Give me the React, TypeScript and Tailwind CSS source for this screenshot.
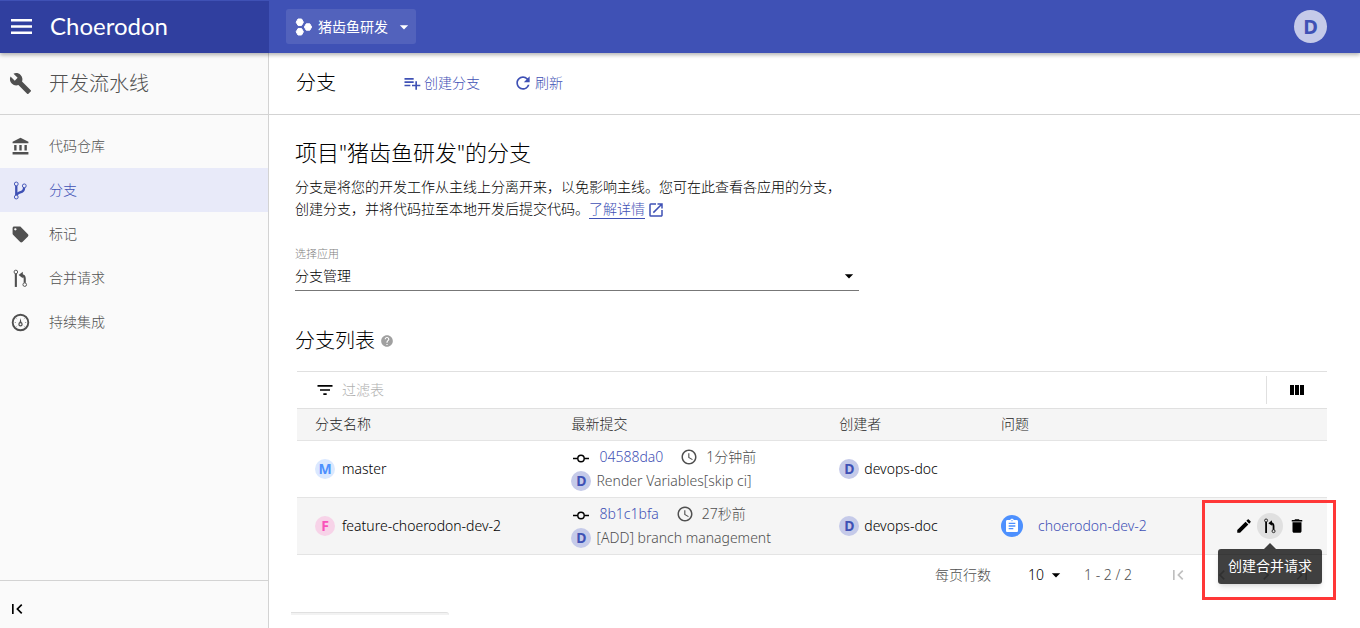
import { useState } from 'react';
import {
  MdAccessTime,
  MdAccountBalance,
  MdArrowDropDown,
  MdAssignment,
  MdBuild,
  MdChevronLeft,
  MdChevronRight,
  MdDelete,
  MdEdit,
  MdFilterList,
  MdFirstPage,
  MdHelp,
  MdLastPage,
  MdLocalOffer,
  MdOpenInNew,
  MdPlaylistAdd,
  MdRefresh,
} from 'react-icons/md';

interface IconProps {
  className?: string;
}

function MenuIcon({ className }: IconProps) {
  return (
    <svg viewBox="0 0 21 15" fill="currentColor" className={className}>
      <path d="M0 0h21v2.600H0zM0 6.200h21v2.600H0zM0 12.400h21V15H0z" />
    </svg>
  );
}

function BranchIcon({ className }: IconProps) {
  return (
    <svg viewBox="0 0 18 18" fill="none" stroke="currentColor" className={className}>
      <circle cx="5" cy="2.8" r="1.8" strokeWidth="0.9" />
      <circle cx="5" cy="15.2" r="1.8" strokeWidth="0.9" />
      <circle cx="12.6" cy="4.6" r="1.8" strokeWidth="0.9" />
      <path d="M5 4.6v8.8" strokeWidth="2.2" />
      <path d="M12.4 6.4c0 4.2-3.2 4-5 4.8-1.200.5-1.900 1.200-2.200 2.200" strokeWidth="2.2" />
    </svg>
  );
}

function MergeIcon({ className }: IconProps) {
  return (
    <svg viewBox="0 0 18 18" fill="none" stroke="currentColor" className={className}>
      <circle cx="4.600" cy="2.800" r="1.700" strokeWidth="0.900" />
      <path d="M4.600 4.500V17" strokeWidth="2" />
      <circle cx="13" cy="14.800" r="1.700" strokeWidth="0.900" />
      <path d="M13 13.100V9c0-2-1-3-3.200-3.200" strokeWidth="2" />
      <path d="M7.200 5.800l4-3.200v6.200z" fill="currentColor" stroke="none" />
    </svg>
  );
}

function PipelineIcon({ className }: IconProps) {
  return (
    <svg viewBox="0 0 18 18" fill="none" stroke="currentColor" className={className}>
      <circle cx="9" cy="9" r="7.400" strokeWidth="1.800" />
      <circle cx="9" cy="10.600" r="1.500" strokeWidth="1.200" />
      <path d="M9 4.800l1 4.600H8z" fill="currentColor" stroke="none" />
      <path d="M3.600 9h1M13.400 9h1M5.200 5.200l.6.6M12.800 5.200l-.6.6M5.200 12.800l.6-.6M12.800 12.800l-.6-.6" strokeWidth="0.600" />
    </svg>
  );
}

function CommitIcon({ className }: IconProps) {
  return (
    <svg viewBox="0 0 20 20" fill="none" stroke="currentColor" strokeWidth="1.400" className={className}>
      <circle cx="10" cy="11.500" r="3.200" />
      <path d="M2 11.500h4.800M13.200 11.500H18" />
    </svg>
  );
}

function ProjectIcon({ className }: IconProps) {
  return (
    <svg viewBox="0 0 18 18" fill="currentColor" stroke="currentColor" strokeLinejoin="round" className={className}>
      <path d="M3 1h3.600l1.800 3.200-1.800 3.200H3L1.200 4.200z" />
      <path d="M3 10.600h3.600l1.800 3.200L6.600 17H3l-1.800-3.200z" />
      <path d="M11.200 5.800h3.600L16.600 9l-1.800 3.200h-3.600L9.400 9z" />
    </svg>
  );
}

function ColumnsIcon({ className }: IconProps) {
  return (
    <svg viewBox="0 0 14 10" fill="currentColor" className={className}>
      <path d="M0 0h4v10H0zM5 0h4v10H5zM10 0h4v10h-4z" />
    </svg>
  );
}

const menuItems = [
  { name: '代码仓库', icon: MdAccountBalance },
  { name: '分支', icon: BranchIcon },
  { name: '标记', icon: MdLocalOffer },
  { name: '合并请求', icon: MergeIcon },
  { name: '持续集成', icon: PipelineIcon },
];

const branches = [
  {
    name: 'master',
    tag: 'M',
    tagClass: 'bg-[#dae8ff] text-[#4d90fe]',
    sha: '04588da0',
    time: '1分钟前',
    message: 'Render Variables[skip ci]',
    creator: 'devops-doc',
    issue: '',
  },
  {
    name: 'feature-choerodon-dev-2',
    tag: 'F',
    tagClass: 'bg-[#f7d3e8] text-[#f953ba]',
    sha: '8b1c1bfa',
    time: '27秒前',
    message: '[ADD] branch management',
    creator: 'devops-doc',
    issue: 'choerodon-dev-2',
  },
];

function Avatar({ text, className = 'bg-[#c5cae9] text-[#3f51b5]' }: { text: string; className?: string }) {
  return (
    <span className={`flex size-5 shrink-0 items-center justify-center rounded-full text-sm leading-5 font-bold ${className}`}>
      {text}
    </span>
  );
}

function Header() {
  return (
    <header className="relative z-20 flex h-[53px] bg-[#3f51b5] text-white shadow-[0_2px_4px_rgba(0,0,0,0.3)]">
      <div className="flex w-[269px] shrink-0 items-center border-t border-[#3f51b5] bg-[#303f9f] pb-0.5 pl-[11px]">
        <button aria-label="menu">
          <MenuIcon className="h-[15px] w-[21px]" />
        </button>
        <span className="ml-[18px] font-['Lato'] text-2xl leading-7 font-normal">Choerodon</span>
      </div>
      <div className="flex flex-1 items-center justify-between pr-[33px] pl-[17px]">
        <button className="flex h-[35px] items-center rounded-[3px] bg-white/10 pr-0.5 pl-[9px] text-sm font-normal">
          <ProjectIcon className="mr-[5px] size-[18px]" />
          猪齿鱼研发
          <MdArrowDropDown className="ml-1.5 size-5" />
        </button>
        <button className="size-[33px] rounded-full bg-[#c5cae9] text-xl font-bold text-[#3f51b5]">D</button>
      </div>
    </header>
  );
}

function Sidebar() {
  const [active, setActive] = useState('分支');

  return (
    <aside className="flex w-[269px] shrink-0 flex-col border-r border-[#d3d3d3] bg-[#fafafa] text-[#505050]">
      <div className="flex h-[62px] items-center border-b border-[#d3d3d3] pl-[9px] text-xl">
        <MdBuild className="mr-[17px] size-[23px]" />
        开发流水线
      </div>
      <nav className="flex-1 pt-[9px]">
        {menuItems.map(({ name, icon: Icon }) => (
          <a
            key={name}
            href="#"
            onClick={() => setActive(name)}
            className={`flex h-11 items-center pl-[11px] text-sm ${
              name === active ? 'bg-[#e8eaf9] text-[#3f51b5]' : ''
            }`}
          >
            <Icon className="mr-[19px] size-[19px]" />
            {name}
          </a>
        ))}
      </nav>
      <div className="flex h-12 items-center border-t border-[#d3d3d3] pt-2 pl-[7px] text-black">
        <button aria-label="collapse">
          <MdFirstPage className="size-5" />
        </button>
      </div>
    </aside>
  );
}

function RowActions() {
  return (
    <div className="relative flex h-12 items-center justify-end pr-[21px]">
      <button aria-label="edit" className="mr-1">
        <MdEdit className="size-[18px]" />
      </button>
      <button
        aria-label="创建合并请求"
        className="flex size-[26px] items-center justify-center rounded-full bg-[#e0e0e0]"
      >
        <MergeIcon className="size-4" />
      </button>
      <button aria-label="delete" className="ml-[5px]">
        <MdDelete className="size-[18px]" />
      </button>
      <div className="absolute top-[41px] right-[5px] z-10 flex flex-col items-center">
        <span className="border-x-6 border-b-6 border-transparent border-b-black/75" />
        <span role="tooltip" className="flex h-[35px] w-[104px] items-center justify-center rounded-[3px] bg-black/75 text-sm font-normal whitespace-nowrap text-white shadow-md">
          创建合并请求
        </span>
      </div>
      <div className="pointer-events-none absolute -top-0.5 -right-[9px] z-10 h-[100px] w-[134px] border-3 border-[#ff3737]" />
    </div>
  );
}

function BranchTable() {
  return (
    <table className="w-full table-fixed text-left text-sm">
      <colgroup>
        <col className="w-[24.9%]" />
        <col className="w-[26%]" />
        <col className="w-[15.7%]" />
        <col />
        <col className="w-[140px]" />
      </colgroup>
      <thead>
        <tr className="h-[31px] border-b border-[#e4e4e4] bg-[#f5f5f5] text-[#262626]">
          <th className="pl-[18px] font-light">分支名称</th>
          <th className="pl-[18px] font-light">最新提交</th>
          <th className="pl-[18px] font-light">创建者</th>
          <th className="pl-[18px] font-light">问题</th>
          <th />
        </tr>
      </thead>
      <tbody>
        {branches.map((branch) => (
          <tr key={branch.name} className={`h-[57px] border-b border-[#e4e4e4] ${branch.issue ? 'bg-[#f5f5f5]' : ''}`}>
            <td className="py-0 pl-[18px]">
              <div className="flex items-center gap-[7px]">
                <Avatar text={branch.tag} className={branch.tagClass} />
                {branch.name}
              </div>
            </td>
            <td className="py-0 pl-[18px] text-[#505050]">
              <div className="flex h-6 items-center">
                <CommitIcon className="mr-2 size-5 text-black" />
                <a href="#" className="text-[#3f51b5]">{branch.sha}</a>
                <MdAccessTime className="mr-2 ml-[17px] size-[18px]" />
                {branch.time}
              </div>
              <div className="flex h-6 items-center gap-[5px]">
                <Avatar text="D" />
                {branch.message}
              </div>
            </td>
            <td className="py-0 pl-[18px]">
              <div className="flex items-center gap-[5px]">
                <Avatar text="D" />
                {branch.creator}
              </div>
            </td>
            <td className="py-0 pl-[18px]">
              {branch.issue && (
                <div className="flex items-center">
                  <span className="mr-[15px] flex size-[22px] items-center justify-center rounded-full bg-[#4d90fe] text-white">
                    <MdAssignment className="size-4" />
                  </span>
                  <a href="#" className="whitespace-nowrap text-[#3f51b5]">{branch.issue}</a>
                </div>
              )}
            </td>
            <td className="p-0">{branch.issue && <RowActions />}</td>
          </tr>
        ))}
      </tbody>
    </table>
  );
}

function Pagination() {
  return (
    <div className="flex h-10 items-center justify-end pr-[11px] text-sm text-[#505050]">
      <label htmlFor="page-size" className="mr-[37px]">每页行数</label>
      <div className="relative mr-5 flex items-center text-black">
        <select id="page-size" className="w-9 appearance-none bg-transparent outline-none">
          <option>10</option>
          <option>20</option>
        </select>
        <MdArrowDropDown className="pointer-events-none absolute -right-0.5 size-5" />
      </div>
      <span className="mr-6">1 - 2 / 2</span>
      <div className="flex text-black/25">
        <button disabled aria-label="first" className="flex w-11 justify-center"><MdFirstPage className="size-5" /></button>
        <button disabled aria-label="prev" className="flex w-11 justify-center"><MdChevronLeft className="size-5" /></button>
        <button disabled aria-label="next" className="flex w-11 justify-center"><MdChevronRight className="size-5" /></button>
        <button disabled aria-label="last" className="flex w-7 justify-center"><MdLastPage className="size-5" /></button>
      </div>
    </div>
  );
}

export default function App() {
  return (
    <div className="flex min-h-screen flex-col bg-white font-['Noto_Sans','Noto_Sans_CJK_SC',sans-serif] font-light text-black">
      <Header />
      <div className="flex flex-1">
        <Sidebar />
        <main className="flex min-w-0 flex-1 flex-col">
          <div className="flex h-[62px] items-center border-b border-[#d3d3d3] pb-0.5 pl-[27px] text-[#3f51b5]">
            <h1 className="mr-[66px] text-xl text-black">分支</h1>
            <button className="mr-[33px] flex items-center gap-0.5 text-sm">
              <MdPlaylistAdd className="size-5" />
              创建分支
            </button>
            <button className="flex items-center gap-0.5 text-sm">
              <MdRefresh className="size-5" />
              刷新
            </button>
          </div>

          <div className="flex-1 pt-[22px] pr-[33px] pl-[26px]">
            <h2 className="text-[22px] leading-[30px]">项目"猪齿鱼研发"的分支</h2>
            <p className="mt-[9px] text-sm leading-[22px]">
              分支是将您的开发工作从主线上分离开来，以免影响主线。您可在此查看各应用的分支，
              <br />
              创建分支，并将代码拉至本地开发后提交代码。
              <a href="#" className="inline-flex items-center text-[#3f51b5]">
                <span className="border-b border-[#3f51b5] leading-[18px]">了解详情</span>
                <MdOpenInNew className="ml-0.5 size-[18px]" />
              </a>
            </p>

            <div className="mt-[27px] w-[564px] max-w-full">
              <label htmlFor="app" className="block text-[11px] leading-[14px] text-[#808080]">选择应用</label>
              <div className="relative flex items-center border-b border-[#777]">
                <select id="app" className="h-[29px] w-full appearance-none bg-transparent text-sm outline-none">
                  <option>分支管理</option>
                </select>
                <MdArrowDropDown className="pointer-events-none absolute right-0 size-5" />
              </div>
            </div>

            <h3 className="mt-9 flex items-center text-xl leading-7">
              分支列表
              <MdHelp className="ml-[5px] size-3.5 text-[#a0a0a0]" />
            </h3>

            <div className="mt-4 ml-0.5">
              <div className="flex h-[38px] items-center border-y border-[#e0e0e0] pl-[18px]">
                <MdFilterList className="mr-[7px] size-5" />
                <input
                  aria-label="过滤表"
                  placeholder="过滤表"
                  className="min-w-0 flex-1 text-sm outline-none placeholder:text-[#b0b0b0]"
                />
                <button aria-label="columns" className="flex h-7 w-[61px] items-center justify-center border-l border-[#e0e0e0]">
                  <ColumnsIcon className="h-2.5 w-3.5" />
                </button>
              </div>
              <BranchTable />
              <Pagination />
            </div>
          </div>

          <div className="mb-[13px] ml-[22px] h-[3px] w-[158px] rounded-tr-[3px] border-t border-[#e0e0e0] bg-[#f2f2f2]" />
        </main>
      </div>
    </div>
  );
}
